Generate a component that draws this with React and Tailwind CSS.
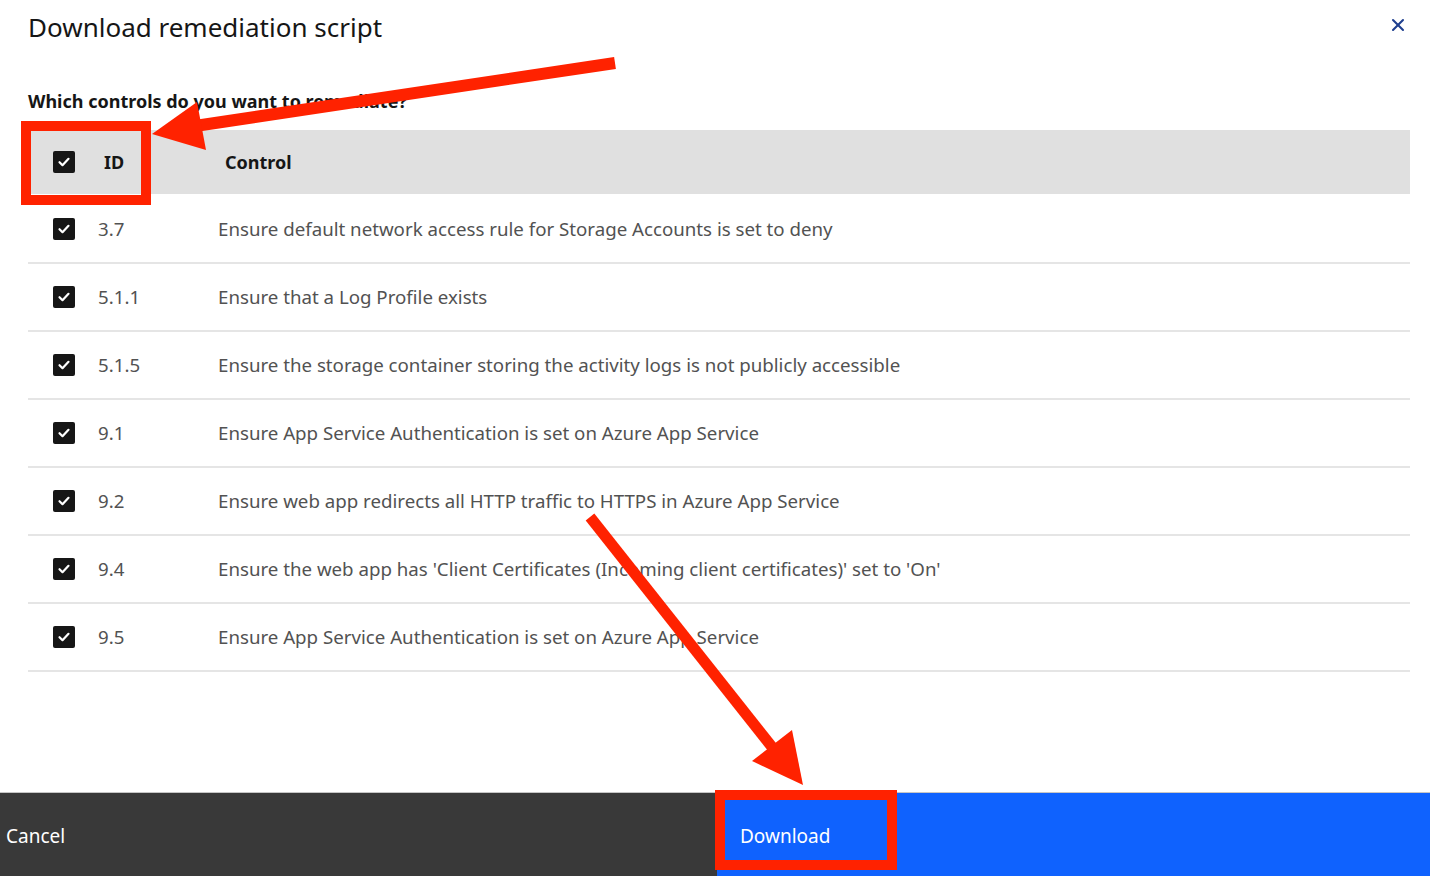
import { X } from "lucide-react";

const rows = [
  ["3.7", "Ensure default network access rule for Storage Accounts is set to deny"],
  ["5.1.1", "Ensure that a Log Profile exists"],
  ["5.1.5", "Ensure the storage container storing the activity logs is not publicly accessible"],
  ["9.1", "Ensure App Service Authentication is set on Azure App Service"],
  ["9.2", "Ensure web app redirects all HTTP traffic to HTTPS in Azure App Service"],
  ["9.4", "Ensure the web app has 'Client Certificates (Incoming client certificates)' set to 'On'"],
  ["9.5", "Ensure App Service Authentication is set on Azure App Service"],
];

function Checkbox() {
  return (
    <span className="flex h-[22px] w-[22px] shrink-0 items-center justify-center rounded-[2px] bg-[#161616]">
      <svg width="14" height="14" viewBox="0 0 14 14" fill="none">
        <path d="M2.5 7.2l3 3 6-6.4" stroke="#fff" strokeWidth="2.2" strokeLinecap="round" strokeLinejoin="round" />
      </svg>
    </span>
  );
}

export default function App() {
  return (
    <div className="relative h-[876px] w-[1430px] overflow-hidden bg-white font-['Noto_Sans',sans-serif] text-[#161616]">
      {/* Header */}
      <div className="flex items-start justify-between pl-[28px] pr-[22px] pt-[8px]">
        <h1 className="text-[26px] font-normal leading-[38px]">Download remediation script</h1>
        <button className="mt-[7px] text-[#1f3f8f]">
          <X size={20} strokeWidth={2.5} />
        </button>
      </div>

      <p className="mt-[43px] pl-[28px] text-[18px] font-bold leading-[24px]">Which controls do you want to remediate?</p>

      {/* Table */}
      <div className="ml-[28px] mr-[20px] mt-[17px]">
        <div className="flex h-[64px] items-center bg-[#e0e0e0] text-[18px] font-bold">
          <span className="ml-[25px]"><Checkbox /></span>
          <span className="ml-[29px] w-[121px]">ID</span>
          <span>Control</span>
        </div>
        <div className="mt-[2px]">
          {rows.map(([id, text]) => (
            <div key={id} className="flex h-[68px] items-center border-b-2 border-[#e5e5e5] text-[18.7px] text-[#525252]">
              <span className="ml-[25px]"><Checkbox /></span>
              <span className="ml-[23px] w-[120px]">{id}</span>
              <span>{text}</span>
            </div>
          ))}
        </div>
      </div>

      {/* Footer */}
      <div className="absolute bottom-0 left-0 right-0 flex h-[84px] border-t border-[#c6c6c6] text-[19px] text-white">
        <button className="flex w-[717px] items-center bg-[#393939] pl-[6px] pt-[4px]">Cancel</button>
        <button className="flex flex-1 items-center bg-[#0f62fe] pl-[23px] pt-[4px]">Download</button>
      </div>

      {/* Annotations */}
      <svg className="pointer-events-none absolute left-0 top-0" width="1430" height="876">
        <rect x="26" y="126" width="120" height="74" fill="none" stroke="#ff2200" strokeWidth="10" />
        <line x1="615" y1="63" x2="195" y2="126" stroke="#ff2200" strokeWidth="12" />
        <polygon points="152,134 197,102 206,150" fill="#ff2200" />
        <rect x="720" y="795" width="172" height="70" fill="none" stroke="#ff2200" strokeWidth="10" />
        <line x1="590" y1="517" x2="776" y2="752" stroke="#ff2200" strokeWidth="11" />
        <polygon points="803,785 752,761 792,730" fill="#ff2200" />
      </svg>
    </div>
  );
}
